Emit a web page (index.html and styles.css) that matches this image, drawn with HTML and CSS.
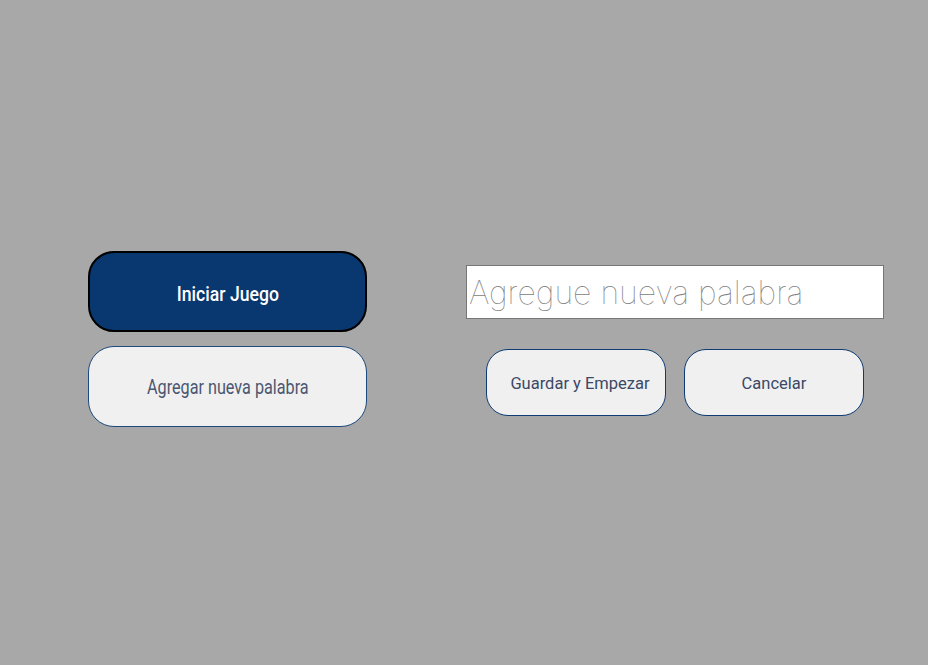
FILE: index.html
```html
<!DOCTYPE html>
<html lang="es">
<head>
<meta charset="utf-8">
<title>Juego</title>
<link rel="stylesheet" href="styles.css">
</head>
<body>
<main class="page">
  <section class="menu">
    <button class="btn btn-primary"><span class="label">Iniciar Juego</span></button>
    <button class="btn btn-secondary"><span class="label label-narrow">Agregar nueva palabra</span></button>
  </section>
  <section class="add">
    <input class="word-input" type="text" placeholder="Agregue nueva palabra">
    <div class="actions">
      <button class="btn-small btn-save">Guardar y Empezar</button>
      <button class="btn-small">Cancelar</button>
    </div>
  </section>
</main>
</body>
</html>
```
FILE: styles.css
```css
html, body {
  margin: 0;
  padding: 0;
  background: #a8a8a8;
  height: 100%;
}
.page {
  display: flex;
  align-items: flex-start;
  padding: 251px 0 0 88px;
  box-sizing: border-box;
  height: 665px;
}
.menu {
  display: flex;
  flex-direction: column;
  gap: 14px;
  width: 279px;
}
.btn {
  box-sizing: border-box;
  width: 279px;
  height: 81px;
  border-radius: 26px;
  font-family: Roboto, "Liberation Sans", sans-serif;
  cursor: pointer;
}
.label {
  display: inline-block;
  white-space: nowrap;
  transform: scaleX(0.84);
}
.label-narrow {
  transform: scaleX(0.81);
}
.btn-primary {
  background: #09376f;
  border: 2px solid #000;
  color: #fff;
  font-size: 21px;
  font-weight: 500;
  padding-top: 5px;
}
.btn-secondary {
  background: #f0f0f0;
  border: 1px solid #1d4a7e;
  color: #4a5670;
  font-size: 20px;
  font-weight: 400;
  padding-top: 2px;
}
.add {
  margin-left: 99px;
  margin-top: 14px;
  display: flex;
  flex-direction: column;
  align-items: flex-start;
}
.word-input {
  box-sizing: border-box;
  width: 418px;
  height: 54px;
  border: 1px solid #767676;
  background: #fff;
  padding: 0 2px;
  font-family: Inter, sans-serif;
  font-weight: 100;
  font-size: 32px;
  outline: none;
}
.word-input::placeholder {
  color: #808080;
}
.actions {
  display: flex;
  gap: 18px;
  margin-top: 30px;
  margin-left: 20px;
}
.btn-small {
  box-sizing: border-box;
  width: 180px;
  height: 67px;
  border-radius: 22px;
  background: #f0f0f0;
  border: 1px solid #0d3b72;
  color: #3b4866;
  font-family: Roboto, sans-serif;
  font-size: 16.5px;
  font-weight: 400;
  padding: 1px 0 0;
  cursor: pointer;
}
.btn-save {
  padding-left: 8px;
}
```
